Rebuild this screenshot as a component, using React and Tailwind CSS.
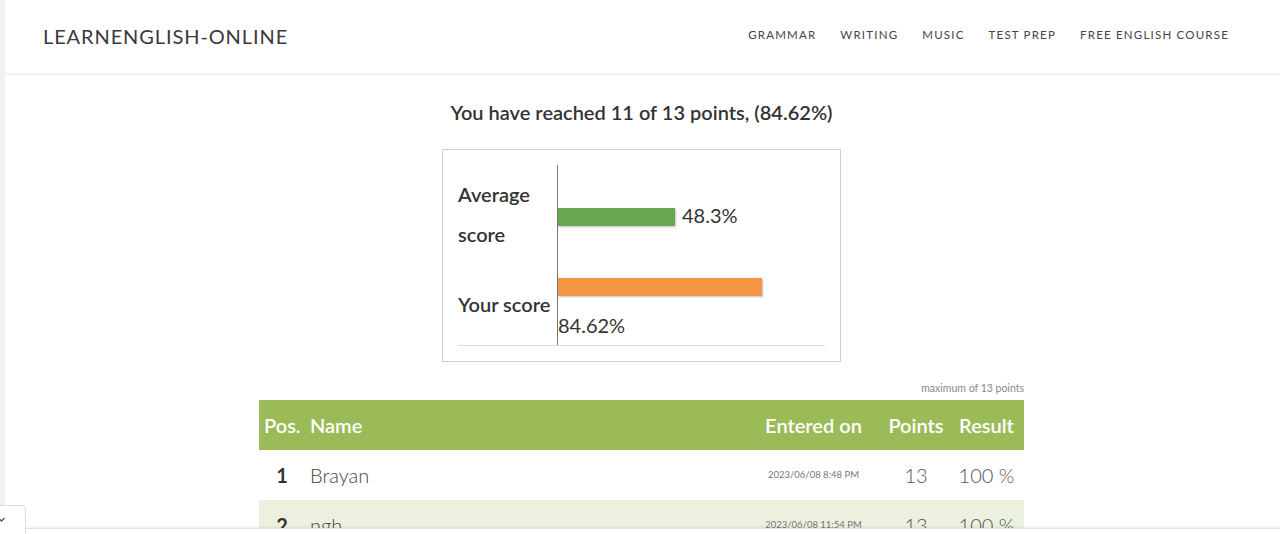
import React from 'react';

const navItems = ['GRAMMAR', 'WRITING', 'MUSIC', 'TEST PREP', 'FREE ENGLISH COURSE'];

const results = [
  { pos: 1, name: 'Brayan', date: '2023/06/08 8:48 PM', points: 13, result: '100 %' },
  { pos: 2, name: 'ngh', date: '2023/06/08 11:54 PM', points: 13, result: '100 %' },
  { pos: 3, name: 'Ana', date: '2023/06/09 9:12 AM', points: 12, result: '92 %' },
];

export default function App() {
  return (
    <div className="min-h-screen bg-white border-l-[5px] border-[#f1f1f1] font-['Lato','Open_Sans',sans-serif] text-[#333]">
      {/* Header */}
      <header className="h-[75px] border-b-2 border-[#f2f2f2] flex items-center justify-between pl-[38px] pr-[51px]">
        <div className="text-[20px] tracking-[0.9px] text-[#3a3a3a] leading-none mb-[2px]">LEARNENGLISH-ONLINE</div>
        <nav className="flex items-center gap-[24px] mb-[4px]">
          {navItems.map(item => (
            <a key={item} href="#" className="text-[11.5px] tracking-[1.2px] text-[#444] leading-none">{item}</a>
          ))}
        </nav>
      </header>

      {/* Quiz result */}
      <div className="pr-[2px]">
        <main className="w-[765px] mx-auto pt-[23px]">
          <h2 className="text-center text-[20px] leading-[28px] font-semibold text-[#333]">
            You have reached 11 of 13 points, (84.62%)
          </h2>

          {/* Chart */}
          <div className="w-[399px] mx-auto mt-[23px] border border-[#cfcfcf] p-[15px]">
            <div className="flex border-b border-[#dcdcdc]">
              <div className="w-[99px] pt-[9px] text-[20px] leading-[40px] font-semibold text-[#333]">
                <div>Average</div>
                <div>score</div>
                <div className="mt-[30px] whitespace-nowrap">Your score</div>
              </div>
              <div className="flex-1 border-l border-[#777] h-[180px]">
                <div className="flex items-start">
                  <div className="mt-[43px] w-[117px] h-[18px] bg-[#6aa84f] shadow-[1px_1px_2px_rgba(0,0,0,0.25)]" />
                  <span className="mt-[38px] ml-[7px] text-[20px] leading-[24px] text-[#333]">48.3%</span>
                </div>
                <div className="mt-[51px] w-[204px] h-[18px] bg-[#f59645] shadow-[1px_1px_2px_rgba(0,0,0,0.25)]" />
                <div className="mt-[17px] text-[20px] leading-[24px] text-[#333]">84.62%</div>
              </div>
            </div>
          </div>

          <div className="text-right text-[10.5px] text-[#888] mt-[20px] leading-[12px]">maximum of 13 points</div>

          {/* Results table */}
          <div className="mt-[6px]">
            <div className="grid grid-cols-[46px_1fr_139px_66px_75px] h-[50px] items-center bg-[#9bbb59] text-white text-[20px] font-semibold">
              <div className="pl-[5px]">Pos.</div>
              <div className="pl-[5px]">Name</div>
              <div className="text-center">Entered on</div>
              <div className="text-center">Points</div>
              <div className="text-center">Result</div>
            </div>
            {results.map((r, i) => (
              <div
                key={r.pos}
                className={`grid grid-cols-[46px_1fr_139px_66px_75px] h-[50px] items-center ${i % 2 === 1 ? 'bg-[#ebf1de]' : 'bg-white'}`}
              >
                <div className="text-center text-[20px] font-bold text-[#333]">{r.pos}</div>
                <div className="pl-[5px] text-[20px] font-light text-[#444]">{r.name}</div>
                <div className="text-center text-[9.5px] text-[#777]">{r.date}</div>
                <div className="text-center text-[20px] font-light text-[#555]">{r.points}</div>
                <div className="text-center text-[20px] font-light text-[#555]">{r.result}</div>
              </div>
            ))}
          </div>
        </main>
      </div>

      {/* Collapsed bottom bar */}
      <div className="fixed left-0 right-0 bottom-0 h-[6px] bg-white border-t border-[#e2e2e2] shadow-[0_-1px_3px_rgba(0,0,0,0.08)]" />
      <div className="fixed left-0 bottom-0 w-[26px] h-[29px] bg-white border border-l-0 border-b-0 border-[#dcdcdc] rounded-tr-[4px] flex items-start">
        <svg width="8" height="6" viewBox="0 0 8 6" className="mt-[11px] -ml-[2px]">
          <path d="M1 1.5 L3.5 4 L6.5 1" fill="none" stroke="#555" strokeWidth="1.3" />
        </svg>
      </div>
    </div>
  );
}
